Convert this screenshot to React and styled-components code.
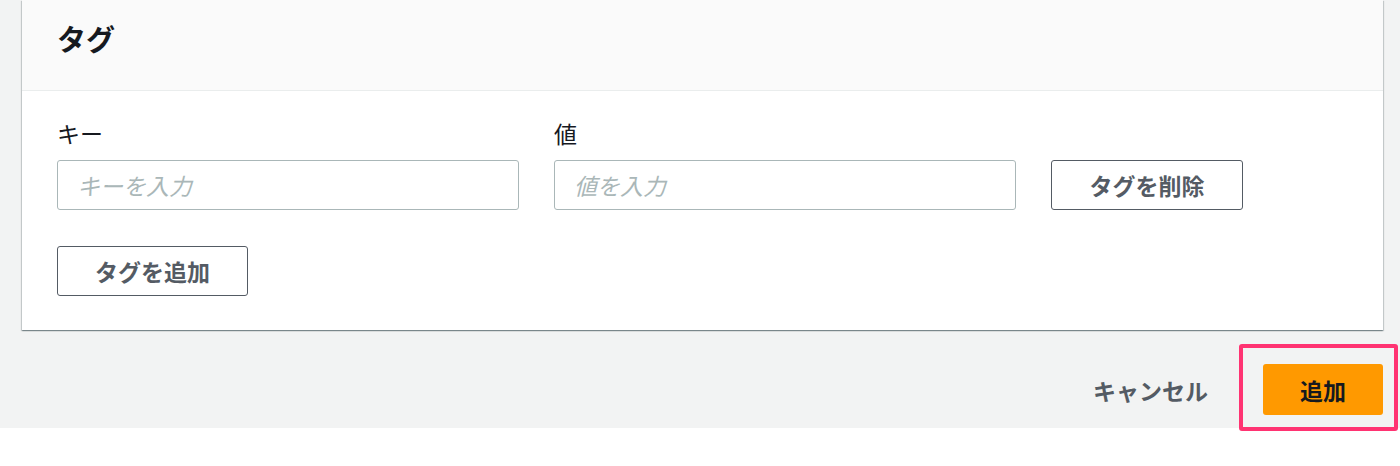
import React from "react";
import styled, { createGlobalStyle } from "styled-components";

const Global = createGlobalStyle`
  html, body { margin: 0; padding: 0; background: #ffffff; }
  body { font-family: "Noto Sans CJK JP", "Noto Sans", sans-serif; color: #16191f; }
  * { box-sizing: border-box; }
`;

const Screen = styled.div`
  background: #ffffff;
  height: 466px;
`;

const Page = styled.div`
  background: #f2f3f3;
  height: 428px;
  padding: 0 17px 0 22px;
  display: flex;
  flex-direction: column;
`;

const Card = styled.section`
  background: #ffffff;
  box-shadow: 0 1px 1px 0 rgba(0, 28, 36, 0.3), 1px 1px 1px 0 rgba(0, 28, 36, 0.15),
    -1px 1px 1px 0 rgba(0, 28, 36, 0.15);
`;

const CardHeader = styled.header`
  background: #fafafa;
  border-bottom: 1px solid #eaeded;
  height: 91px;
  padding: 17px 35px 0;
`;

const Title = styled.h2`
  margin: 0;
  font-size: 29px;
  line-height: 42px;
  font-weight: 700;
  color: #16191f;
`;

const CardBody = styled.div`
  padding: 27px 35px 34px;
  display: flex;
  flex-direction: column;
  gap: 36px;
`;

const TagRow = styled.div`
  display: grid;
  grid-template-columns: 462px 462px 192px;
  column-gap: 35px;
  align-items: end;
`;

const Field = styled.label`
  display: flex;
  flex-direction: column;
  gap: 12px;
`;

const Label = styled.span`
  font-size: 23px;
  line-height: 30px;
  color: #16191f;
`;

const Input = styled.input`
  height: 50px;
  width: 100%;
  border: 1px solid #aab7b8;
  border-radius: 3px;
  padding: 0 19px;
  font-family: inherit;
  font-size: 23px;
  color: #16191f;
  background: #ffffff;
  outline: none;
  &::placeholder {
    color: #aab7b8;
    font-style: italic;
  }
`;

const OutlineButton = styled.button`
  height: 50px;
  width: ${(p) => p.$w}px;
  border: 1px solid #545b64;
  border-radius: 3px;
  background: #ffffff;
  color: #545b64;
  font-family: inherit;
  font-size: 23px;
  font-weight: 700;
  cursor: pointer;
  padding: 0;
`;

const Footer = styled.footer`
  display: flex;
  justify-content: flex-end;
  align-items: center;
  gap: 55px;
  padding-top: 34px;
`;

const LinkButton = styled.button`
  border: none;
  background: none;
  padding: 0;
  color: #545b64;
  font-family: inherit;
  font-size: 23px;
  font-weight: 700;
  cursor: pointer;
`;

const PrimaryWrap = styled.div`
  position: relative;
  height: 51px;
`;

const PrimaryButton = styled.button`
  height: 51px;
  width: 120px;
  border: none;
  border-radius: 3px;
  background: #ff9900;
  color: #16191f;
  font-family: inherit;
  font-size: 23px;
  font-weight: 700;
  cursor: pointer;
  display: block;
`;

const Highlight = styled.span`
  position: absolute;
  z-index: 2;
  left: -24px;
  top: -20px;
  width: 159px;
  height: 87px;
  border: 4px solid #ff3372;
  border-radius: 3px;
  pointer-events: none;
`;

export default function App() {
  return (
    <>
      <Global />
      <Screen>
        <Page>
          <Card>
            <CardHeader>
              <Title>タグ</Title>
            </CardHeader>
            <CardBody>
              <TagRow>
                <Field>
                  <Label>キー</Label>
                  <Input placeholder="キーを入力" />
                </Field>
                <Field>
                  <Label>値</Label>
                  <Input placeholder="値を入力" />
                </Field>
                <OutlineButton $w={192}>タグを削除</OutlineButton>
              </TagRow>
              <div>
                <OutlineButton $w={191}>タグを追加</OutlineButton>
              </div>
            </CardBody>
          </Card>
          <Footer>
            <LinkButton>キャンセル</LinkButton>
            <PrimaryWrap>
              <PrimaryButton>追加</PrimaryButton>
              <Highlight />
            </PrimaryWrap>
          </Footer>
        </Page>
      </Screen>
    </>
  );
}
